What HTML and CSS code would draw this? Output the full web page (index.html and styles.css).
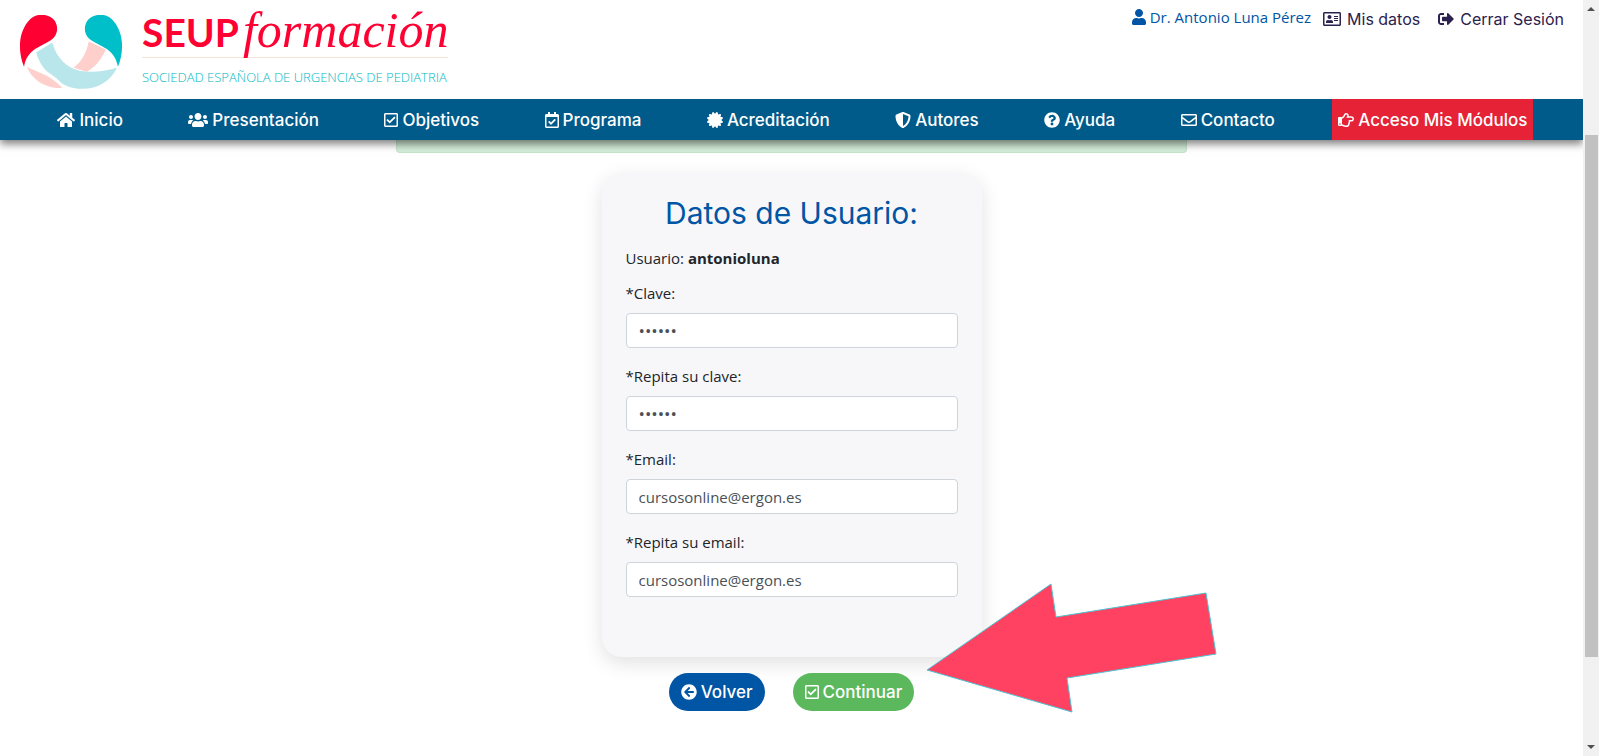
FILE: index.html
```
<!DOCTYPE html>
<html lang="es">
<head>
  <meta charset="UTF-8" />
  <meta name="viewport" content="width=device-width, initial-scale=1.0" />
  <title>SEUP formación - Datos de Usuario</title>
  <link rel="stylesheet" href="styles.css">
</head>
<body>
  <div class="page">
    <header class="header">
      <div class="top">
        <a class="logo" href="#">
          <svg class="logo-mark" viewBox="1 1 101 73" aria-hidden="true">
            <path fill="#ffcfcc" d="M8 52C16 57 30 59 43 73C28 74 13 66 8 52Z"/>
            <path fill="#ffcfcc" d="M69 27L86 35C81 46 75 53 67 57L54 53C62 47 67 38 69 27Z"/>
            <path fill="#b9e6ea" d="M17 38L33 28C37 43 47 53 60 56C72 58 83 57 97 53C91 66 78 74 63 74C50 74 43 70 37 64C26 57 20 49 17 38Z"/>
            <path fill="none" stroke="#fff" stroke-width="2" d="M5 51C15 50 33 58 46 74"/>
            <path fill="#ff0033" d="M5 52C-2 35 0 16 11 5C17 -1 29 -1 35 6C40 13 38 22 31 26C20 33 8 35 5 52Z"/>
            <path fill="#00bfc9" d="M98 52C105 35 103 16 92 5C86 -1 74 -1 68 6C63 13 65 22 72 26C83 33 95 35 98 52Z"/>
          </svg>
          <span class="logo-text">
            <span class="logo-name"><b>SEUP</b> <i>formación</i></span>
            <span class="logo-sub">SOCIEDAD ESPAÑOLA DE URGENCIAS DE PEDIATRIA</span>
          </span>
        </a>
        <div class="session">
          <span class="user"><svg class="icon" viewBox="0 0 448 512"><path d="M224 256c70.7 0 128-57.3 128-128S294.7 0 224 0 96 57.3 96 128s57.3 128 128 128zm89.6 32h-16.7c-22.2 10.2-46.9 16-72.9 16s-50.6-5.8-72.9-16h-16.7C60.2 288 0 348.2 0 422.4V464c0 26.5 21.5 48 48 48h352c26.5 0 48-21.5 48-48v-41.6c0-74.2-60.2-134.4-134.4-134.4z"/></svg>Dr. Antonio Luna Pérez</span>
          <a href="#"><svg class="icon" viewBox="0 0 576 512"><path d="M528 32H48C21.5 32 0 53.5 0 80v352c0 26.5 21.5 48 48 48h480c26.5 0 48-21.5 48-48V80c0-26.5-21.5-48-48-48zm0 400H48V80h480v352zM208 256c35.3 0 64-28.7 64-64s-28.7-64-64-64-64 28.7-64 64 28.7 64 64 64zm-89.6 128h179.2c12.4 0 22.4-8.6 22.4-19.2v-19.2c0-31.8-30.1-57.6-67.2-57.6-10.8 0-18.7 8-44.8 8-26.9 0-33.4-8-44.8-8-37.1 0-67.2 25.8-67.2 57.6v19.2c0 10.6 10 19.2 22.4 19.2zM360 320h112c4.4 0 8-3.6 8-8v-16c0-4.4-3.6-8-8-8H360c-4.4 0-8 3.6-8 8v16c0 4.4 3.6 8 8 8zm0-64h112c4.4 0 8-3.6 8-8v-16c0-4.4-3.6-8-8-8H360c-4.4 0-8 3.6-8 8v16c0 4.4 3.6 8 8 8zm0-64h112c4.4 0 8-3.6 8-8v-16c0-4.4-3.6-8-8-8H360c-4.4 0-8 3.6-8 8v16c0 4.4 3.6 8 8 8z"/></svg>Mis datos</a>
          <a href="#"><svg class="icon" viewBox="0 0 512 512"><path d="M497 273L329 441c-15 15-41 4.5-41-17v-96H152c-13.3 0-24-10.7-24-24v-96c0-13.3 10.7-24 24-24h136V88c0-21.4 25.9-32 41-17l168 168c9.3 9.4 9.3 24.6 0 34zM192 436v-40c0-6.6-5.4-12-12-12H96c-17.7 0-32-14.3-32-32V160c0-17.7 14.3-32 32-32h84c6.6 0 12-5.4 12-12V76c0-6.6-5.4-12-12-12H96c-53 0-96 43-96 96v192c0 53 43 96 96 96h84c6.6 0 12-5.4 12-12z"/></svg>Cerrar Sesión</a>
        </div>
      </div>

      <nav class="menu">
        <a href="#"><svg class="icon" viewBox="0 0 576 512"><path d="M280.37 148.26L96 300.11V464a16 16 0 0 0 16 16l112.06-.29a16 16 0 0 0 15.92-16V368a16 16 0 0 1 16-16h64a16 16 0 0 1 16 16v95.64a16 16 0 0 0 16 16.05L464 480a16 16 0 0 0 16-16V300L295.67 148.26a12.19 12.19 0 0 0-15.3 0zM571.6 251.47L488 182.56V44.05a12 12 0 0 0-12-12h-56a12 12 0 0 0-12 12v72.61L318.47 43a48 48 0 0 0-61 0L4.34 251.47a12 12 0 0 0-1.6 16.9l25.5 31A12 12 0 0 0 45.15 301l235.22-193.74a12.19 12.19 0 0 1 15.3 0L530.9 301a12 12 0 0 0 16.9-1.6l25.5-31a12 12 0 0 0-1.7-16.93z"/></svg>Inicio</a>
        <a href="#"><svg class="icon" viewBox="0 0 640 512"><path d="M96 224c35.3 0 64-28.7 64-64s-28.7-64-64-64-64 28.7-64 64 28.7 64 64 64zm448 0c35.3 0 64-28.7 64-64s-28.7-64-64-64-64 28.7-64 64 28.7 64 64 64zm32 32h-64c-17.6 0-33.5 7.1-45.1 18.6 40.3 22.1 68.9 62 75.1 109.4h66c17.7 0 32-14.3 32-32v-32c0-35.3-28.7-64-64-64zm-256 0c61.9 0 112-50.1 112-112S381.9 32 320 32 208 82.1 208 144s50.1 112 112 112zm76.8 32h-8.3c-20.8 10-43.9 16-68.5 16s-47.6-6-68.5-16h-8.3C179.6 288 128 339.6 128 403.2V432c0 26.5 21.5 48 48 48h288c26.5 0 48-21.5 48-48v-28.8c0-63.6-51.6-115.2-115.2-115.2zm-223.7-13.4C161.5 263.1 145.6 256 128 256H64c-35.3 0-64 28.7-64 64v32c0 17.7 14.3 32 32 32h65.9c6.3-47.4 34.9-87.3 75.2-109.4z"/></svg>Presentación</a>
        <a href="#"><svg class="icon" viewBox="0 0 448 512"><path d="M400 32H48C21.490 32 0 53.490 0 80v352c0 26.510 21.490 48 48 48h352c26.510 0 48-21.490 48-48V80c0-26.510-21.490-48-48-48zm0 400H48V80h352v352zm-35.864-241.724L191.547 361.480c-4.705 4.667-12.303 4.637-16.970-.068l-90.781-91.516c-4.667-4.705-4.637-12.303.069-16.971l22.719-22.536c4.705-4.667 12.303-4.637 16.970.069l59.792 60.277 141.352-140.216c4.705-4.667 12.303-4.637 16.970.068l22.536 22.718c4.667 4.706 4.637 12.304-.068 16.971z"/></svg>Objetivos</a>
        <a href="#"><svg class="icon" viewBox="0 0 448 512"><path d="M400 64h-48V12c0-6.627-5.373-12-12-12h-40c-6.627 0-12 5.373-12 12v52H160V12c0-6.627-5.373-12-12-12h-40c-6.627 0-12 5.373-12 12v52H48C21.490 64 0 85.490 0 112v352c0 26.510 21.490 48 48 48h352c26.510 0 48-21.490 48-48V112c0-26.510-21.490-48-48-48zm-6 400H54a6 6 0 0 1-6-6V160h352v298a6 6 0 0 1-6 6zm-52.849-200.650L198.842 404.519c-4.705 4.667-12.303 4.637-16.971-.068l-75.091-75.699c-4.667-4.705-4.637-12.303.068-16.971l22.719-22.536c4.705-4.667 12.303-4.637 16.970.069l44.104 44.461 111.072-110.181c4.705-4.667 12.303-4.637 16.971.068l22.536 22.718c4.667 4.705 4.636 12.303-.069 16.970z"/></svg>Programa</a>
        <a href="#"><svg class="icon" viewBox="0 0 512 512"><path d="M458.622 255.920l45.985-45.005c13.708-12.977 7.316-36.039-10.664-40.339l-62.650-15.990 17.661-62.015c4.991-17.838-11.829-34.663-29.661-29.671l-61.994 17.667-15.984-62.671C337.085.197 313.765-6.276 300.990 7.228L256 53.570 211.011 7.229c-12.630-13.351-36.047-7.234-40.325 10.668l-15.984 62.671-61.995-17.667C74.870 57.907 58.056 74.738 63.046 92.572l17.661 62.015-62.650 15.990C.069 174.878-6.310 197.944 7.392 210.915l45.985 45.005-45.985 45.004c-13.708 12.977-7.316 36.039 10.664 40.339l62.650 15.990-17.661 62.015c-4.991 17.838 11.829 34.663 29.661 29.671l61.994-17.667 15.984 62.671c4.439 18.575 27.696 24.018 40.325 10.668L256 458.610l44.989 46.001c12.500 13.488 35.987 7.486 40.325-10.668l15.984-62.671 61.994 17.667c17.836 4.994 34.651-11.837 29.661-29.671l-17.661-62.015 62.650-15.990c17.987-4.302 24.366-27.367 10.664-40.339l-45.984-45.004z"/></svg>Acreditación</a>
        <a href="#"><svg class="icon" viewBox="0 0 512 512"><path d="M466.5 83.7l-192-80a48.15 48.15 0 0 0-36.9 0l-192 80C27.7 91.1 16 108.6 16 128c0 198.5 114.5 335.7 221.5 380.3 11.8 4.9 25.1 4.9 36.9 0C360.1 472.6 496 349.3 496 128c0-19.4-11.7-36.9-29.5-44.3zM256.1 446.3l-.1-381 175.9 73.3c-3.3 151.4-82.1 261.1-175.8 307.7z"/></svg>Autores</a>
        <a href="#"><svg class="icon" viewBox="0 0 512 512"><path d="M504 256c0 136.997-111.043 248-248 248S8 392.997 8 256C8 119.083 119.043 8 256 8s248 111.083 248 248zM262.655 90c-54.497 0-89.255 22.957-116.549 63.758-3.536 5.286-2.353 12.415 2.715 16.258l34.699 26.310c5.205 3.947 12.621 3.008 16.665-2.122 17.864-22.658 30.113-35.797 57.303-35.797 20.429 0 45.698 13.148 45.698 32.958 0 14.976-12.363 22.667-32.534 33.976C247.128 238.528 216 254.941 216 296v4c0 6.627 5.373 12 12 12h56c6.627 0 12-5.373 12-12v-1.333c0-28.462 83.186-29.647 83.186-106.667 0-58.002-60.165-102-116.531-102zM256 338c-25.365 0-46 20.635-46 46 0 25.364 20.635 46 46 46s46-20.636 46-46c0-25.365-20.635-46-46-46z"/></svg>Ayuda</a>
        <a href="#"><svg class="icon" viewBox="0 0 512 512"><path d="M464 64H48C21.490 64 0 85.490 0 112v288c0 26.510 21.490 48 48 48h416c26.510 0 48-21.490 48-48V112c0-26.510-21.490-48-48-48zm0 48v40.805c-22.422 18.259-58.168 46.651-134.587 106.490-16.841 13.247-50.201 45.072-73.413 44.701-23.208.375-56.579-31.459-73.413-44.701C106.180 199.465 70.425 171.067 48 152.805V112h416zM48 400V214.398c22.914 18.251 55.409 43.862 104.938 82.646 21.857 17.205 60.134 55.186 103.062 54.955 42.717.231 80.509-37.199 103.053-54.947 49.528-38.783 82.032-64.401 104.947-82.653V400H48z"/></svg>Contacto</a>
        <a class="access" href="#"><svg class="icon" viewBox="0 0 512 512"><path d="M428.8 137.6h-86.177a115.52 115.52 0 0 0 2.176-22.4c0-47.914-35.072-83.2-92-83.2-45.314 0-57.002 48.537-75.707 78.784-7.735 12.413-16.994 23.317-25.851 33.253l-.131.146-.129.148C135.662 161.807 127.764 168 120.8 168h-2.679c-5.747-4.952-13.536-8-22.12-8H32c-17.673 0-32 12.894-32 28.8v230.4C0 435.106 14.327 448 32 448h64c8.584 0 16.373-3.048 22.12-8h2.679c28.688 0 67.137 40 127.2 40h21.299c62.542 0 98.8-38.658 99.94-91.145 12.482-17.813 18.491-40.785 15.985-62.791A93.148 93.148 0 0 0 393.152 304H428.8c45.435 0 83.2-37.584 83.2-83.2 0-45.099-38.101-83.2-83.2-83.2zm0 118.4h-91.026c12.837 14.669 14.415 42.825-4.95 61.05 11.227 19.646 1.687 45.624-12.925 53.625 6.524 39.128-10.076 61.325-50.6 61.325H248c-45.491 0-77.21-35.913-120-39.676V215.571c25.239-2.964 42.966-21.222 59.075-39.596 11.275-12.65 21.725-25.3 30.799-39.875C232.355 112.712 244.006 80 252.8 80c23.375 0 44 8.8 44 35.2 0 35.2-26.4 53.075-26.4 70.4h158.4c18.425 0 35.2 16.5 35.2 35.2 0 18.975-16.225 35.2-35.2 35.2zM88 384c0 13.255-10.745 24-24 24s-24-10.745-24-24 10.745-24 24-24 24 10.745 24 24z"/></svg>Acceso Mis Módulos</a>
      </nav>
    </header>

    <main>
      <div class="alert"></div>
      <form class="user-form">
        <div class="card">
          <h1>Datos de Usuario:</h1>
          <p>Usuario: <strong>antonioluna</strong></p>
          <div class="field">
            <label for="clave">*Clave:</label>
            <input type="password" id="clave" value="123456">
          </div>
          <div class="field">
            <label for="clave2">*Repita su clave:</label>
            <input type="password" id="clave2" value="123456">
          </div>
          <div class="field">
            <label for="email">*Email:</label>
            <input type="email" id="email" value="cursosonline@ergon.es">
          </div>
          <div class="field">
            <label for="email2">*Repita su email:</label>
            <input type="email" id="email2" value="cursosonline@ergon.es">
          </div>
        </div>
        <div class="actions">
          <button type="button" class="back"><svg class="icon" viewBox="0 0 512 512"><path d="M256 504C119 504 8 393 8 256S119 8 256 8s248 111 248 248-111 248-248 248zm28.9-143.6L209.4 288H392c13.3 0 24-10.7 24-24v-16c0-13.3-10.7-24-24-24H209.4l75.5-72.4c9.7-9.3 9.9-24.8.4-34.3l-11-10.9c-9.4-9.4-24.6-9.4-33.9 0L107.7 239c-9.4 9.4-9.4 24.6 0 33.9l132.7 132.7c9.4 9.4 24.6 9.4 33.9 0l11-10.9c9.5-9.5 9.3-25-.4-34.3z"/></svg>Volver</button>
          <button type="submit" class="next"><svg class="icon" viewBox="0 0 448 512"><path d="M400 32H48C21.490 32 0 53.490 0 80v352c0 26.510 21.490 48 48 48h352c26.510 0 48-21.490 48-48V80c0-26.510-21.490-48-48-48zm0 400H48V80h352v352zm-35.864-241.724L191.547 361.480c-4.705 4.667-12.303 4.637-16.970-.068l-90.781-91.516c-4.667-4.705-4.637-12.303.069-16.971l22.719-22.536c4.705-4.667 12.303-4.637 16.970.069l59.792 60.277 141.352-140.216c4.705-4.667 12.303-4.637 16.970.068l22.536 22.718c4.667 4.706 4.637 12.304-.068 16.971z"/></svg>Continuar</button>
        </div>
        <svg class="pointer" viewBox="0 0 292 132" aria-hidden="true">
          <path d="M2 88L126 2L131 35L281 11L291 72L142 96L147 130Z"/>
        </svg>
      </form>
    </main>
  </div>

  <div class="scrollbar" aria-hidden="true">
    <span class="up"></span>
    <span class="thumb"></span>
    <span class="down"></span>
  </div>
</body>
</html>
```
FILE: styles.css
```
* {
  box-sizing: border-box;
}
body {
  display: flex;
  margin: 0;
  min-height: 100vh;
  background: #fff;
  color: #212529;
  font-family: "Open Sans", "Noto Sans", sans-serif;
  font-size: 15px;
  line-height: 24px;
}
a {
  color: inherit;
  text-decoration: none;
}
.page {
  flex: 1;
  min-width: 0;
}
.icon {
  height: 16px;
  margin-right: 4px;
  fill: currentColor;
  flex: none;
}

/* header */
.header {
  position: relative;
  z-index: 1;
  background: #fff;
  box-shadow: 0 4px 8px rgba(0,0,0,0.5);
}
.top {
  display: flex;
  justify-content: space-between;
  align-items: flex-start;
  height: 99px;
  padding: 0 19px 0 20px;
}
.logo {
  display: flex;
  gap: 20px;
}
.logo-mark {
  width: 102px;
  height: 74px;
  margin-top: 15px;
}
.logo-text {
  display: flex;
  flex-direction: column;
  padding-top: 6px;
}
.logo-name {
  display: flex;
  align-items: baseline;
  gap: 4px;
  height: 52px;
  border-bottom: 1px solid #f3e3d8;
  color: #ff0033;
  line-height: 48px;
}
.logo-name b {
  font-family: Lato, sans-serif;
  font-size: 39px;
}
.logo-name i {
  font-family: "Liberation Serif", serif;
  font-size: 50px;
}
.logo-sub {
  padding-top: 7px;
  color: #00b9c4;
  font-family: "Open Sans", sans-serif;
  font-size: 13px;
  font-weight: 300;
}
.session {
  display: flex;
  align-items: center;
  gap: 18px;
  padding-top: 5px;
  color: #2b2250;
  font-family: Inter, sans-serif;
  font-size: 16px;
}
.session a,
.user {
  display: flex;
  align-items: center;
}
.session a .icon {
  margin-right: 6px;
}
.user {
  margin: 0 -6px 4px 0;
  color: #0055a5;
  font-family: "Open Sans", "Noto Sans", sans-serif;
  font-size: 15px;
}
.menu {
  display: flex;
  justify-content: space-evenly;
  background: #005b8a;
  color: #fff;
  font-family: Inter, sans-serif;
  font-size: 17px;
  font-weight: 500;
}
.menu a {
  display: flex;
  align-items: center;
  height: 41px;
  padding: 0 8px;
}
.menu .access {
  padding: 0 6px;
  background: #e52236;
}

/* form */
.alert {
  width: 50%;
  height: 13px;
  margin: 0 auto 20px;
  background: #d4edda;
  border: 1px solid #c3e6cb;
  border-top: none;
  border-radius: 0 0 4px 4px;
}
.user-form {
  position: relative;
  width: 380px;
  margin: 0 auto;
}
.card {
  padding: 21px 24px 44px;
  background: #f7f7fa;
  border-radius: 20px;
  box-shadow: 0 6px 20px rgba(0,0,0,0.12);
}
.card h1 {
  margin: 0 0 14px;
  color: #0055a5;
  font-family: Inter, sans-serif;
  font-size: 30px;
  font-weight: 400;
  line-height: 38px;
  text-align: center;
}
.card p {
  margin: 0 0 11px;
}
.field {
  margin-bottom: 16px;
}
.field label {
  display: block;
  margin-bottom: 8px;
}
.field input {
  display: block;
  width: 100%;
  height: 35px;
  padding: 0 12px;
  border: 1px solid #ced4da;
  border-radius: 4px;
  background: #fff;
  color: #495057;
  font: inherit;
}
.field input[type="password"] {
  font-size: 17px;
}
.actions {
  display: flex;
  justify-content: center;
  gap: 28px;
  margin-top: 16px;
}
.actions button {
  display: flex;
  align-items: center;
  height: 38px;
  padding: 0 12px;
  border: none;
  border-radius: 20px;
  color: #fff;
  font-family: Inter, sans-serif;
  font-size: 17px;
  font-weight: 500;
  cursor: pointer;
}
.back {
  background: #0055a5;
}
.next {
  background: #5cb85c;
}

/* arrow over the form, pointing at the submit button */
.pointer {
  position: absolute;
  left: 323px;
  bottom: -3px;
  width: 292px;
  height: 132px;
  fill: #ff4261;
  stroke: #4cc4d2;
  pointer-events: none;
}

/* scroll track */
.scrollbar {
  position: relative;
  z-index: 2;
  display: flex;
  flex-direction: column;
  align-items: center;
  width: 16px;
  height: 100vh;
  padding: 7px 0;
  background: #f1f1f1;
}
.thumb {
  width: 13px;
  height: 69vh;
  margin: 124px 0 auto;
  background: #c1c1c1;
}
.up,
.down {
  border: 4px solid transparent;
}
.up {
  border-top: none;
  border-bottom-color: #505050;
}
.down {
  border-bottom: none;
  border-top-color: #505050;
}
```
